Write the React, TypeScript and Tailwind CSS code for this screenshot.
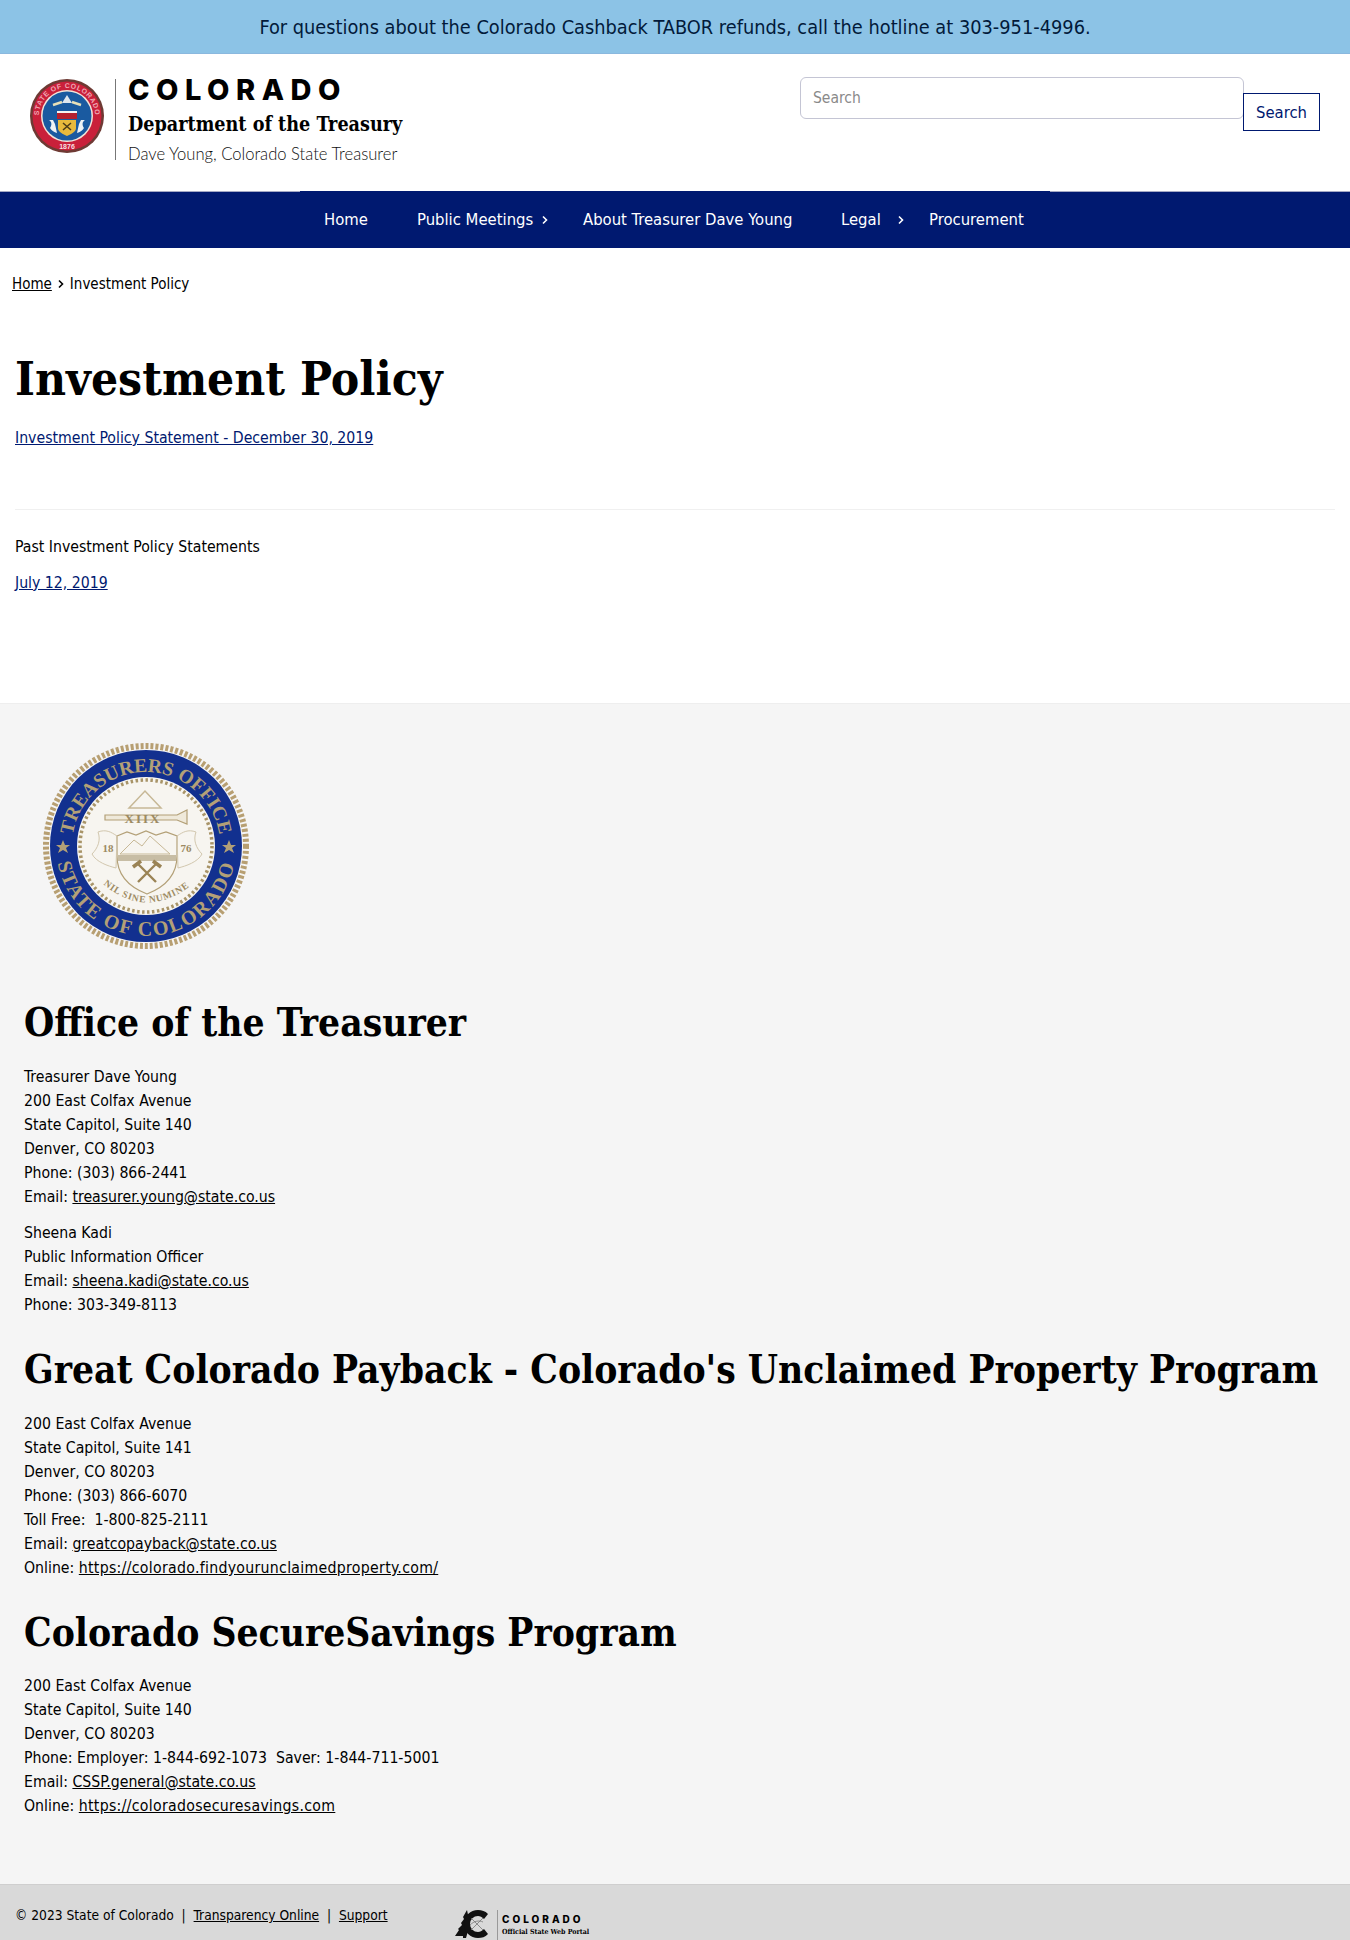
import React from "react";

const body = "font-['DejaVu_Sans_Condensed','Noto_Sans',sans-serif]";

function SmallSeal() {
  return (
    <svg width="76" height="76" viewBox="0 0 76 76" className="shrink-0">
      <defs>
        <path id="ss-top" d="M 10 38 A 28 28 0 0 1 66 38" />
      </defs>
      <circle cx="38" cy="38" r="37" fill="#6e3a34" />
      <circle cx="38" cy="38" r="34.5" fill="#c9203a" />
      <circle cx="38" cy="38" r="26" fill="#f3e4d8" />
      <circle cx="38" cy="38" r="24.5" fill="#1a5aa0" />
      <text fontSize="7" fill="#f0a8b4" fontFamily="Liberation Sans" fontWeight="700" letterSpacing="0.6">
        <textPath href="#ss-top" startOffset="50%" textAnchor="middle">STATE OF COLORADO</textPath>
      </text>
      <text x="38" y="71" fontSize="7" fill="#f8dfe0" textAnchor="middle" fontFamily="Liberation Sans" fontWeight="700">1876</text>
      <path d="M38 17l5 8H33z" fill="#dfe6ee" />
      <path d="M24 27l9-3M52 27l-9-3" stroke="#e8e0b8" strokeWidth="2.500" />
      <rect x="28" y="33" width="20" height="2" fill="#f3f3f3" />
      <rect x="28" y="35" width="20" height="6" fill="#b5202f" />
      <path d="M29 42h18v8c0 4-5 6-9 8-4-2-9-4-9-8z" fill="#e7b93c" />
      <path d="M34 45l8 7M42 45l-8 7" stroke="#4a3a18" strokeWidth="1.500" />
      <path d="M20 42c3 2 3 5 1 8 2 3 4 4 7 5l-2-9-2-4z" fill="#eef2f5" />
      <path d="M56 42c-3 2-3 5-1 8-2 3-4 4-7 5l2-9 2-4z" fill="#eef2f5" />
    </svg>
  );
}

function BigSeal() {
  return (
    <svg width="212" height="208" viewBox="0 0 212 208" className="shrink-0">
      <defs>
        <path id="bs-top" d="M 32 104 A 74 74 0 0 1 180 104" />
        <path id="bs-bot" d="M 16 104 A 90 90 0 0 0 196 104" />
        <path id="bs-motto" d="M 63 142 Q 106 178 150 144" />
      </defs>
      <circle cx="106" cy="104" r="100" fill="none" stroke="#b79f72" strokeWidth="6" strokeDasharray="3 2" />
      <circle cx="106" cy="104" r="96" fill="#12308f" />
      <circle cx="106" cy="104" r="69" fill="#f7f5f0" />
      <circle cx="106" cy="104" r="66" fill="none" stroke="#a89468" strokeWidth="3.500" strokeDasharray="2.500 2.500" />
      <text fontSize="19.500" fill="#b3a077" fontFamily="Liberation Serif" fontWeight="700">
        <textPath href="#bs-top" startOffset="50%" textAnchor="middle">TREASURERS OFFICE</textPath>
      </text>
      <text fontSize="20" fill="#b3a077" fontFamily="Liberation Serif" fontWeight="700" letterSpacing="1.800">
        <textPath href="#bs-bot" startOffset="50%" textAnchor="middle">STATE OF COLORADO</textPath>
      </text>
      <path d="M23 98l2 5h5l-4 3 2 5-5-3-5 3 2-5-4-3h5z" fill="#b3a077" />
      <path d="M189 98l2 5h5l-4 3 2 5-5-3-5 3 2-5-4-3h5z" fill="#b3a077" />
      <path d="M89 66l16-17 16 17z" fill="none" stroke="#c7b896" strokeWidth="1.500" />
      <path d="M65 73h72l10-5v14l-10-4H65z" fill="#efe9da" stroke="#b3a077" strokeWidth="1.200" />
      <text x="103" y="81" textAnchor="middle" fontSize="13" fill="#9c8a62" fontFamily="Liberation Serif" fontWeight="700" letterSpacing="2">XIIX</text>
      <path d="M77 94l10-4 9 3 10-4 10 4 10-3 11 4c0 8 0 14 0 20 0 20-12 31-30 38-18-7-30-18-30-38 0-6 0-12 0-20z" fill="none" stroke="#b3a077" strokeWidth="1.200" />
      <path d="M80 112l14-14 8 6 8-10 20 18z" fill="none" stroke="#c7b896" strokeWidth="1" />
      <rect x="78" y="113" width="58" height="6" fill="#c7bda5" />
      <path d="M58 90c8-3 13 0 19 4l-1 32c-8-2-20-6-24-14 6-6 9-14 6-22z" fill="none" stroke="#d2c7ae" strokeWidth="1" />
      <path d="M156 90c-8-3-13 0-19 4l1 32c8-2 20-6 24-14-6-6-9-14-6-22z" fill="none" stroke="#d2c7ae" strokeWidth="1" />
      <text x="68" y="110" textAnchor="middle" fontSize="11" fill="#9c8a62" fontFamily="Liberation Serif" fontWeight="700">18</text>
      <text x="146" y="110" textAnchor="middle" fontSize="11" fill="#9c8a62" fontFamily="Liberation Serif" fontWeight="700">76</text>
      <path d="M98 122l18 18M116 122l-18 18" stroke="#9a8355" strokeWidth="2.400" />
      <path d="M93 125l8-6M121 125l-8-6" stroke="#9a8355" strokeWidth="3.500" />
      <text fontSize="9.500" fill="#9c8a62" fontFamily="Liberation Serif" fontWeight="700" letterSpacing="0.800">
        <textPath href="#bs-motto" startOffset="50%" textAnchor="middle">NIL SINE NUMINE</textPath>
      </text>
    </svg>
  );
}

function CoLogo() {
  return (
    <svg width="36" height="28" viewBox="0 0 36 28" className="shrink-0">
      <path d="M12 0L8 7l1 2-3 4 1 2-4 4 1 1-4 6h8v2h3l4-14z" fill="#111" />
      <path d="M23 0a14 14 0 1 0 0 28c4 0 7-1 10-4l-4-5c-2 2-4 3-6 3a8 8 0 0 1 0-16c2 0 4 1 6 3l4-5c-3-3-6-4-10-4z" fill="#111" />
      <path d="M16 8l12 12M28 8L16 20M15 15c4-4 9-5 13-3" fill="none" stroke="#777" strokeWidth="0.800" />
    </svg>
  );
}

function Chevron() {
  return (
    <svg width="8" height="10" viewBox="0 0 8 10" className="shrink-0">
      <path d="M2 1.500L5.500 5 2 8.500" fill="none" stroke="currentColor" strokeWidth="1.600" />
    </svg>
  );
}

function H2({ children }: { children: React.ReactNode }) {
  return (
    <h2 className="font-['DejaVu_Serif_Condensed',serif] font-bold text-[38.600px] leading-[48px] text-black whitespace-nowrap">
      {children}
    </h2>
  );
}

function A({ children }: { children: React.ReactNode }) {
  return <a className="underline">{children}</a>;
}

function U({ children }: { children: React.ReactNode }) {
  return <a className="underline tracking-[0.300px]">{children}</a>;
}

function Lines({ lines, className = "" }: { lines: React.ReactNode[]; className?: string }) {
  return (
    <div className={`text-[15.700px] leading-[24px] ${className}`}>
      {lines.map((l, i) => (
        <div key={i} className="whitespace-pre">{l}</div>
      ))}
    </div>
  );
}

export default function App() {
  return (
    <div className={`${body} h-[1940px] overflow-hidden bg-white text-black text-[15.700px] flex flex-col`}>
      <div className="h-[54px] shrink-0 bg-[#8cc3e6] border-b border-[#8ab8de] flex items-center justify-center pt-[2px] text-[19.800px] text-[#021a3a] whitespace-nowrap">
        For questions about the Colorado Cashback TABOR refunds, call the hotline at 303-951-4996.
      </div>

      <header className="h-[137px] shrink-0 flex justify-between pl-[29px] pr-[30px]">
        <div className="flex items-start pt-[25px]">
          <div className="mt-[-1px]"><SmallSeal /></div>
          <div className="ml-[10px] w-px h-[81px] bg-[#777777]" />
          <div className="ml-[12px] flex flex-col">
            <div className="font-['Inter',sans-serif] font-extrabold text-[29px] leading-[26px] tracking-[6.500px] mt-[-2px] whitespace-nowrap">COLORADO</div>
            <div className="font-['DejaVu_Serif_Condensed',serif] font-bold text-[19.600px] leading-[26px] mt-[9px] whitespace-nowrap">Department of the Treasury</div>
            <div className="font-['Lato',sans-serif] font-light text-[16.600px] text-[#111111] leading-[20px] mt-[6px] whitespace-nowrap">Dave Young, Colorado State Treasurer</div>
          </div>
        </div>
        <div className="flex items-start pt-[23px]">
          <input
            placeholder="Search"
            className={`${body} w-[444px] h-[42px] rounded-md border border-[#c4c5d4] pl-3 pr-3 pb-[1px] text-[15.500px] placeholder:text-[#8a8a8a] outline-none`}
          />
          <button className="mt-[16px] -ml-px w-[77px] h-[38px] border border-[#001970] bg-white text-[#001970] pt-[2px] text-[16.500px]">Search</button>
        </div>
      </header>

      <nav className="h-[57px] shrink-0 bg-[#001970] border-t border-[#a5a9c4] text-white text-[16.500px]">
        <ul className="-mt-px h-[57px] pt-[1px] bg-[#001970] w-[750px] mx-auto flex items-center pl-[24px] whitespace-nowrap">
          <li className="w-[93px]">Home</li>
          <li className="flex items-center w-[166px]">Public Meetings<span className="ml-[8px]"><Chevron /></span></li>
          <li className="w-[258px]">About Treasurer Dave Young</li>
          <li className="flex items-center w-[88px]">Legal<span className="ml-[16px]"><Chevron /></span></li>
          <li>Procurement</li>
        </ul>
      </nav>

      <div className="flex items-center gap-[5px] pl-[12px] pt-[25px] text-[15px] leading-[22px]">
        <a className="underline">Home</a>
        <Chevron />
        <span>Investment Policy</span>
      </div>

      <main className="px-[15px] shrink-0 h-[408px]">
        <h1 className="font-['DejaVu_Serif_Condensed',serif] font-bold text-[47.500px] leading-[60px] mt-[53px]">Investment Policy</h1>
        <p className="mt-[18px] leading-[24px]"><a className="underline text-[#001970]">Investment Policy Statement - December 30, 2019</a></p>
        <hr className="mt-[59px] border-t border-[#f0f0f0]" />
        <p className="mt-[25px] leading-[24px]">Past Investment Policy Statements</p>
        <p className="mt-[12px] leading-[24px]"><a className="underline text-[#001970]">July 12, 2019</a></p>
      </main>

      <footer className="h-[1181px] shrink-0 bg-[#f5f5f5] border-t border-[#eeeeee] pl-[24px] pt-[38px]">
        <div className="ml-[16px]"><BigSeal /></div>
        <div className="mt-[49px]"><H2>Office of the Treasurer</H2></div>
        <Lines
          className="mt-[18px]"
          lines={[
            "Treasurer Dave Young",
            "200 East Colfax Avenue",
            "State Capitol, Suite 140",
            "Denver, CO 80203",
            "Phone: (303) 866-2441",
            <>Email: <A>treasurer.young@state.co.us</A></>,
          ]}
        />
        <Lines
          className="mt-[12px]"
          lines={[
            "Sheena Kadi",
            "Public Information Officer",
            <>Email: <A>sheena.kadi@state.co.us</A></>,
            "Phone: 303-349-8113",
          ]}
        />
        <div className="mt-[29px]"><H2>Great Colorado Payback - Colorado's Unclaimed Property Program</H2></div>
        <Lines
          className="mt-[18px]"
          lines={[
            "200 East Colfax Avenue",
            "State Capitol, Suite 141",
            "Denver, CO 80203",
            "Phone: (303) 866-6070",
            "Toll Free:  1-800-825-2111",
            <>Email: <A>greatcopayback@state.co.us</A></>,
            <>Online: <U>https://colorado.findyourunclaimedproperty.com/</U></>,
          ]}
        />
        <div className="mt-[29px]"><H2>Colorado SecureSavings Program</H2></div>
        <Lines
          className="mt-[17px]"
          lines={[
            "200 East Colfax Avenue",
            "State Capitol, Suite 140",
            "Denver, CO 80203",
            "Phone: Employer: 1-844-692-1073  Saver: 1-844-711-5001",
            <>Email: <A>CSSP.general@state.co.us</A></>,
            <>Online: <U>https://coloradosecuresavings.com</U></>,
          ]}
        />
      </footer>

      <div className="flex-1 bg-[#d9d9d9] border-t border-[#cfcfcf] flex items-start pl-[15px] pt-[20px] text-[13.700px] leading-[20px] whitespace-pre relative">
        <span>© 2023 State of Colorado  |  <A>Transparency Online</A>  |  <A>Support</A></span>
        <div className="absolute left-[455px] top-[25px] flex items-start">
          <CoLogo />
          <div className="ml-[6px] pl-[4px] border-l border-[#999] h-[30px]">
            <div className="font-['Inter',sans-serif] font-extrabold text-[10px] tracking-[3px] leading-[14px] mt-[2px]">COLORADO</div>
            <div className="font-['DejaVu_Serif_Condensed',serif] font-bold text-[7px] leading-[12px]">Official State Web Portal</div>
          </div>
        </div>
      </div>
    </div>
  );
}
